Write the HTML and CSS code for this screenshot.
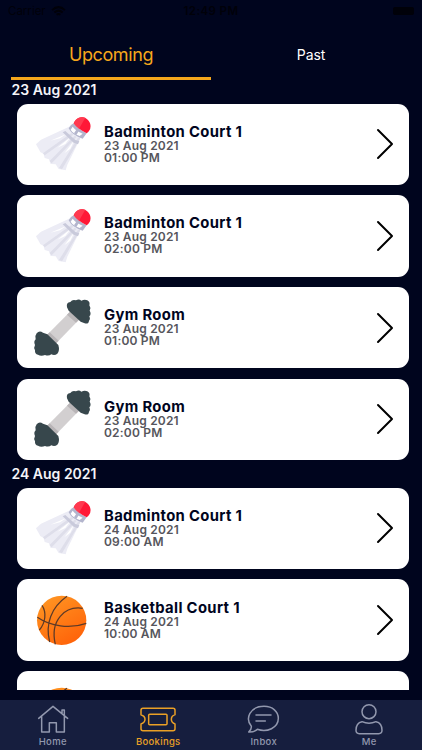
FILE: index.html
```html
<!DOCTYPE html>
<html lang="en">
<head>
    <meta charset="UTF-8">
    <meta name="viewport" content="width=device-width, initial-scale=1.0">
    <title>Bookings</title>
    <link rel="stylesheet" href="styles.css">
</head>
<body>
    <svg class="sprite" aria-hidden="true">
        <defs>
            <linearGradient id="orange" x1="0" y1="0" x2="0.6" y2="1">
                <stop offset="0" stop-color="#ff9a25"/>
                <stop offset="1" stop-color="#ff650a"/>
            </linearGradient>
        </defs>
        <symbol id="shuttlecock" viewBox="69 103 180 180">
            <path fill="#ececf5" d="M182 139 L93 180 L78 194 L86 208 L91 217 L101 223 L104 235 L117 239 L122 253 L137 254 L146 268 L167 272 L172 255 L213 171 Z"/>
            <path fill="#dedeea" d="M184 160 L99 221 L104 227 L190 165 Z M194 168 L119 244 L125 251 L200 172 Z M204 174 L147 265 L156 269 L211 176 Z"/>
            <path fill="#fff" d="M169 163 L121 183 L150 176 Z M181 173 L142 204 L166 193 Z M192 183 L163 221 L181 207 Z"/>
            <path fill="#c9cadb" d="M166 154 L196 181 L208 185 L204 194 L191 189 L158 158 Z"/>
            <path fill="#b3b5cd" d="M183 136 L191 131 Q204 148 230 161 L218 177 Q186 167 176 146 Z"/>
            <path fill="#fff" d="M188 141 L182 150 Q189 162 209 169 L218 162 Q198 154 188 141 Z"/>
            <path fill="#b3b5cd" d="M199 150 L206 155 L199 166 L192 161 Z"/>
            <path fill="#ff1837" d="M191 131 A26 26 0 1 1 230 161 Q204 148 191 131 Z"/>
            <path fill="#ff3a50" d="M191 131 A26 26 0 0 1 226 114 L207 147 Q197 140 191 131 Z"/>
        </symbol>
        <symbol id="dumbbell" viewBox="69 38 180 180">
            <path fill="#d2cfd0" d="M180 79 L207 103 L137 175 L110 150 Z"/>
            <path fill="#b9b5b7" d="M180 79 L207 103 L198 112 L171 88 Z M119 141 L146 166 L137 175 L110 150 Z"/>
            <path fill="#37474c" d="M171 66 Q168 51 181 50 Q187 41 198 45 Q207 40 214 46 Q224 41 232 45 Q241 50 238 60 Q244 68 239 76 Q245 86 238 93 Q242 102 237 106 Q236 117 224 114 L212 109 L176 76 Z"/>
            <path fill="#37474c" d="M80 144 Q88 134 99 142 L112 147 L145 179 Q150 196 142 205 Q134 212 124 207 Q116 213 105 209 Q93 214 84 208 Q74 207 75 195 Q70 188 75 179 Q70 169 77 162 Q74 151 80 144 Z"/>
        </symbol>
        <symbol id="basketball" viewBox="69 60 180 180">
            <circle cx="155" cy="151" r="74" fill="url(#orange)"/>
            <path fill="none" stroke="#5d3a28" stroke-width="3.8" d="M82 142 C121 169 179 178 229 160 M171 79 C124 112 105 161 119 216 M218 115 C165 107 119 151 136 223 M96 106 C110 126 107 159 88 180"/>
        </symbol>
        <symbol id="home" viewBox="104 69 108 96">
            <path d="M115 115 L158 79 L202 115 M124 109 V156 H147 V128 H168 V156 H192 V107 M192 105 V90 H185 V99"/>
        </symbol>
        <symbol id="ticket" viewBox="421 69 108 96">
            <path d="M430 85 H520 Q526 85 526 91 V104 Q515 108 515 118 Q515 128 526 132 V146 Q526 152 520 152 H430 Q424 152 424 146 V132 Q436 128 436 118 Q436 108 424 104 V91 Q424 85 430 85 Z M450 103 H499 Q502 103 502 106 V131 Q502 134 499 134 H450 Q447 134 447 131 V106 Q447 103 450 103 Z"/>
        </symbol>
        <symbol id="chat" viewBox="105 69 108 96">
            <path d="M121 139 C102 116 116 79 159 79 C185 79 202 95 202 115 C202 144 168 158 139 148 Q128 157 113 156 Q122 148 121 139 Z M135 105 H180 M135 123 H163"/>
        </symbol>
        <symbol id="person" viewBox="421 69 108 96">
            <circle cx="475" cy="95" r="21"/>
            <path d="M454 125 Q475 134 496 125 Q514 128 514 151 Q514 161 504 161 H446 Q436 161 436 151 Q436 128 454 125 Z"/>
        </symbol>
        <symbol id="chevron" viewBox="0 0 18 32">
            <path d="M2 2 L16 16 L2 30"/>
        </symbol>
    </svg>

    <div class="status-bar">
        <div class="carrier">
            <span>Carrier</span>
            <svg class="wifi" viewBox="0 0 16 12"><path d="M1 4.5 Q8 -2 15 4.5 M3.5 7 Q8 3 12.5 7 M6 9.5 Q8 8 10 9.5"/></svg>
        </div>
        <div class="clock">12:49 PM</div>
        <div class="power"><span class="battery"></span></div>
    </div>

    <nav class="tabs">
        <a class="tab active" href="#">Upcoming</a>
        <a class="tab" href="#">Past</a>
    </nav>

    <main class="bookings">
        <h2 class="day">23 Aug 2021</h2>
        <div class="card">
            <svg class="sport"><use href="#shuttlecock"/></svg>
            <div class="details">
                <h3>Badminton Court 1</h3>
                <p>23 Aug 2021</p>
                <p>01:00 PM</p>
            </div>
            <svg class="chevron"><use href="#chevron"/></svg>
        </div>
        <div class="card">
            <svg class="sport"><use href="#shuttlecock"/></svg>
            <div class="details">
                <h3>Badminton Court 1</h3>
                <p>23 Aug 2021</p>
                <p>02:00 PM</p>
            </div>
            <svg class="chevron"><use href="#chevron"/></svg>
        </div>
        <div class="card">
            <svg class="sport"><use href="#dumbbell"/></svg>
            <div class="details">
                <h3>Gym Room</h3>
                <p>23 Aug 2021</p>
                <p>01:00 PM</p>
            </div>
            <svg class="chevron"><use href="#chevron"/></svg>
        </div>
        <div class="card">
            <svg class="sport"><use href="#dumbbell"/></svg>
            <div class="details">
                <h3>Gym Room</h3>
                <p>23 Aug 2021</p>
                <p>02:00 PM</p>
            </div>
            <svg class="chevron"><use href="#chevron"/></svg>
        </div>
        <h2 class="day">24 Aug 2021</h2>
        <div class="card">
            <svg class="sport"><use href="#shuttlecock"/></svg>
            <div class="details">
                <h3>Badminton Court 1</h3>
                <p>24 Aug 2021</p>
                <p>09:00 AM</p>
            </div>
            <svg class="chevron"><use href="#chevron"/></svg>
        </div>
        <div class="card">
            <svg class="sport"><use href="#basketball"/></svg>
            <div class="details">
                <h3>Basketball Court 1</h3>
                <p>24 Aug 2021</p>
                <p>10:00 AM</p>
            </div>
            <svg class="chevron"><use href="#chevron"/></svg>
        </div>
        <div class="card">
            <svg class="sport"><use href="#basketball"/></svg>
        </div>
    </main>

    <nav class="bottom-nav">
        <a href="#"><svg><use href="#home"/></svg><span>Home</span></a>
        <a class="active" href="#"><svg><use href="#ticket"/></svg><span>Bookings</span></a>
        <a href="#"><svg><use href="#chat"/></svg><span>Inbox</span></a>
        <a href="#"><svg><use href="#person"/></svg><span>Me</span></a>
    </nav>
</body>
</html>
```

FILE: styles.css
```css
* {
    box-sizing: border-box;
}

body {
    margin: 0;
    height: 750px;
    display: flex;
    flex-direction: column;
    overflow: hidden;
    background: #00051e;
    font-family: Inter, "Liberation Sans", sans-serif;
}

a {
    text-decoration: none;
}

.sprite {
    width: 0;
    height: 0;
    position: absolute;
}

.status-bar {
    height: 22px;
    padding: 0 8px;
    display: grid;
    grid-template-columns: 1fr auto 1fr;
    align-items: center;
    color: #000109;
    font-size: 11.5px;
}

.carrier {
    display: flex;
    align-items: center;
    gap: 5px;
}

.wifi {
    width: 15px;
    height: 11px;
    fill: none;
    stroke: #000109;
    stroke-width: 2.2;
}

.clock {
    font-weight: 600;
    letter-spacing: 0.4px;
}

.power {
    display: flex;
    justify-content: flex-end;
}

.battery {
    width: 21px;
    height: 8px;
    border-radius: 2px;
    background: #000109;
}

.tabs {
    height: 58px;
    flex: none;
    padding: 10px 11px 0;
    display: flex;
}

.tab {
    width: 200px;
    display: flex;
    align-items: center;
    justify-content: center;
    border-bottom: 3px solid transparent;
    color: #fff;
    font-size: 14px;
    letter-spacing: -0.1px;
}

.tab.active {
    border-color: #f5a71c;
    color: #f5a71c;
    font-size: 18px;
    font-weight: 400;
    letter-spacing: -0.4px;
}

.bookings {
    height: 610px;
    flex: none;
    overflow: hidden;
    padding: 0 13.5px 0 16.5px;
}

.day {
    height: 23.5px;
    margin: 0 0 0 -5px;
    color: #f4f4f8;
    font-size: 14px;
    font-weight: 600;
    line-height: 20px;
}

.card {
    height: 81.5px;
    margin-bottom: 10.2px;
    padding: 0 15px 0 16.5px;
    display: flex;
    align-items: center;
    border-radius: 11px;
    background: #fff;
}

.card + .day {
    margin-top: -6.1px;
}

.sport {
    width: 60px;
    height: 60px;
    margin-right: 11px;
}

.details {
    flex: 1;
    padding-bottom: 1px;
    color: #56565c;
}

.details h3 {
    margin: 0;
    color: #00051e;
    font-size: 14.8px;
    font-weight: 700;
    line-height: 16px;
    letter-spacing: 0.35px;
}

.details p {
    margin: 0;
    font-size: 12px;
    font-weight: 600;
    line-height: 12px;
    letter-spacing: 0.2px;
}

.chevron {
    width: 18px;
    height: 32px;
    fill: none;
    stroke: #000;
    stroke-width: 2;
    stroke-linecap: round;
    stroke-linejoin: round;
}

.bottom-nav {
    height: 50px;
    margin-top: 10px;
    padding-top: 3px;
    display: flex;
    background: #161e3e;
}

.bottom-nav a {
    flex: 1;
    display: flex;
    flex-direction: column;
    align-items: center;
    color: #9298ae;
    font-size: 9.5px;
    font-weight: 500;
    line-height: 14px;
    letter-spacing: 0.3px;
}

.bottom-nav a.active {
    color: #eaa026;
}

.bottom-nav svg {
    width: 36px;
    height: 32px;
    fill: none;
    stroke: currentColor;
    stroke-width: 4.5;
    stroke-linejoin: round;
    stroke-linecap: round;
}
```
